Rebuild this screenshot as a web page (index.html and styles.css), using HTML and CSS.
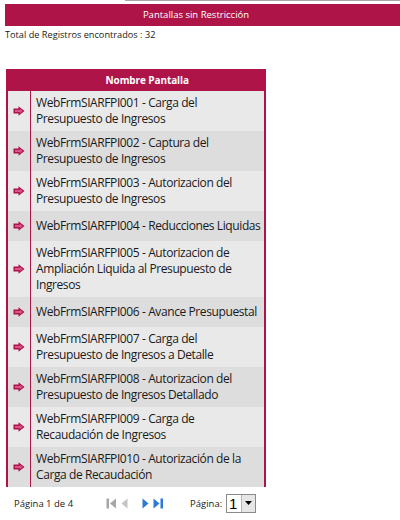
FILE: index.html
```html
<!DOCTYPE html>
<html lang="es">
<head>
    <meta charset="UTF-8">
    <title>Pantallas sin Restricción</title>
    <link rel="stylesheet" href="styles.css">
</head>
<body>
    <div class="top-line"></div>
    <div class="title-bar">Pantallas sin Restricción</div>
    <div class="total">Total de Registros encontrados : 32</div>

    <table class="grid">
        <tr class="grid-head">
            <th class="col-icon"></th>
            <th>Nombre Pantalla</th>
        </tr>
        <tr>
            <td class="col-icon"><svg class="go" viewBox="0 0 12 10"><path d="M0.5 2.5h5V0.3l6 4.7-6 4.7V7.5h-5z"/><path class="go-in" d="M2 4h4.8V2.8l2.8 2.2-2.8 2.2V6H2z"/></svg></td>
            <td>WebFrmSIARFPI001 - Carga del Presupuesto de Ingresos</td>
        </tr>
        <tr>
            <td class="col-icon"><svg class="go" viewBox="0 0 12 10"><path d="M0.5 2.5h5V0.3l6 4.7-6 4.7V7.5h-5z"/><path class="go-in" d="M2 4h4.8V2.8l2.8 2.2-2.8 2.2V6H2z"/></svg></td>
            <td>WebFrmSIARFPI002 - Captura del Presupuesto de Ingresos</td>
        </tr>
        <tr>
            <td class="col-icon"><svg class="go" viewBox="0 0 12 10"><path d="M0.5 2.5h5V0.3l6 4.7-6 4.7V7.5h-5z"/><path class="go-in" d="M2 4h4.8V2.8l2.8 2.2-2.8 2.2V6H2z"/></svg></td>
            <td>WebFrmSIARFPI003 - Autorizacion del Presupuesto de Ingresos</td>
        </tr>
        <tr class="single">
            <td class="col-icon"><svg class="go" viewBox="0 0 12 10"><path d="M0.5 2.5h5V0.3l6 4.7-6 4.7V7.5h-5z"/><path class="go-in" d="M2 4h4.8V2.8l2.8 2.2-2.8 2.2V6H2z"/></svg></td>
            <td>WebFrmSIARFPI004 - Reducciones Liquidas</td>
        </tr>
        <tr>
            <td class="col-icon"><svg class="go" viewBox="0 0 12 10"><path d="M0.5 2.5h5V0.3l6 4.7-6 4.7V7.5h-5z"/><path class="go-in" d="M2 4h4.8V2.8l2.8 2.2-2.8 2.2V6H2z"/></svg></td>
            <td>WebFrmSIARFPI005 - Autorizacion de Ampliación Liquida al Presupuesto de Ingresos</td>
        </tr>
        <tr class="single">
            <td class="col-icon"><svg class="go" viewBox="0 0 12 10"><path d="M0.5 2.5h5V0.3l6 4.7-6 4.7V7.5h-5z"/><path class="go-in" d="M2 4h4.8V2.8l2.8 2.2-2.8 2.2V6H2z"/></svg></td>
            <td>WebFrmSIARFPI006 - Avance Presupuestal</td>
        </tr>
        <tr>
            <td class="col-icon"><svg class="go" viewBox="0 0 12 10"><path d="M0.5 2.5h5V0.3l6 4.7-6 4.7V7.5h-5z"/><path class="go-in" d="M2 4h4.8V2.8l2.8 2.2-2.8 2.2V6H2z"/></svg></td>
            <td>WebFrmSIARFPI007 - Carga del Presupuesto de Ingresos a Detalle</td>
        </tr>
        <tr>
            <td class="col-icon"><svg class="go" viewBox="0 0 12 10"><path d="M0.5 2.5h5V0.3l6 4.7-6 4.7V7.5h-5z"/><path class="go-in" d="M2 4h4.8V2.8l2.8 2.2-2.8 2.2V6H2z"/></svg></td>
            <td>WebFrmSIARFPI008 - Autorizacion del Presupuesto de Ingresos Detallado</td>
        </tr>
        <tr>
            <td class="col-icon"><svg class="go" viewBox="0 0 12 10"><path d="M0.5 2.5h5V0.3l6 4.7-6 4.7V7.5h-5z"/><path class="go-in" d="M2 4h4.8V2.8l2.8 2.2-2.8 2.2V6H2z"/></svg></td>
            <td>WebFrmSIARFPI009 - Carga de Recaudación de Ingresos</td>
        </tr>
        <tr>
            <td class="col-icon"><svg class="go" viewBox="0 0 12 10"><path d="M0.5 2.5h5V0.3l6 4.7-6 4.7V7.5h-5z"/><path class="go-in" d="M2 4h4.8V2.8l2.8 2.2-2.8 2.2V6H2z"/></svg></td>
            <td>WebFrmSIARFPI010 - Autorización de la Carga de Recaudación</td>
        </tr>
    </table>

    <!-- Paginador -->
    <div class="pager">
        <span class="pager-info">Página 1 de 4</span>
        <span class="pager-nav">
            <svg class="nav first" viewBox="0 0 11 11"><rect x="0.5" y="0.5" width="2.5" height="10"/><path d="M10 0.5v10L4 5.5z"/></svg>
            <svg class="nav prev" viewBox="0 0 7 11"><path d="M6.5 0.5v10L0.5 5.5z"/></svg>
            <svg class="nav next" viewBox="0 0 7 11"><path d="M0.5 0.5v10l6-5z"/></svg>
            <svg class="nav last" viewBox="0 0 11 11"><path d="M0.5 0.5v10l6-5z"/><rect x="7.5" y="0.5" width="2.5" height="10"/></svg>
        </span>
        <span class="pager-label">Página:</span>
        <span class="pager-select">
            <span class="sel-value">1</span>
            <span class="sel-btn"><svg viewBox="0 0 7 4"><path d="M0 0h7L3.5 4z"/></svg></span>
        </span>
    </div>
</body>
</html>
```

FILE: styles.css
```css
body {
    margin: 0;
    font-family: "Open Sans", "Noto Sans", sans-serif;
    color: #1a1a1a;
    background-color: #ffffff;
}

.top-line {
    margin-left: 125px;
    height: 1px;
    background-color: #a8a8a8;
}

.title-bar {
    margin: 3px 0 0 5px;
    height: 22px;
    padding-right: 13px;
    background-color: #ae1447;
    color: #ffffff;
    font-size: 9.5px;
    line-height: 22px;
    text-align: center;
}

.total {
    margin: 2px 0 0 5px;
    font-size: 9.2px;
    line-height: 14px;
}

/* Tabla */
.grid {
    margin: 27px 0 0 6px;
    width: 260px;
    border-collapse: collapse;
    border-left: 2px solid #ae1447;
    border-right: 2px solid #ae1447;
    font-size: 12px;
    line-height: 16px;
    letter-spacing: -0.4px;
}

.grid-head th {
    height: 22px;
    padding: 0;
    background-color: #ae1447;
    color: #ffffff;
    font-size: 10px;
    font-weight: bold;
    letter-spacing: -0.1px;
    text-align: center;
}

.grid td {
    padding: 4px 0 4px 5px;
    height: 32px;
    vertical-align: middle;
    background-color: #e9e9e9;
}

.grid tr:nth-child(odd) td {
    background-color: #dddddd;
}

.grid tr.single td {
    height: 22px;
}

.grid .col-icon {
    width: 22px;
    padding: 0;
    text-align: center;
    border-right: 1px solid #ae1447;
}

.grid-head .col-icon {
    border-right: none;
}

.go {
    display: block;
    width: 12px;
    height: 10px;
    margin: 0 auto;
    fill: #b0134a;
}

.go .go-in {
    fill: #d6588a;
}

/* Paginador */
.pager {
    display: flex;
    align-items: center;
    height: 32px;
    font-size: 9.5px;
    color: #222222;
}

.pager-info {
    width: 92px;
    padding-left: 14px;
}

.pager-nav {
    display: flex;
    align-items: center;
    gap: 4px;
    width: 84px;
}

.nav {
    height: 11px;
}

.nav.first,
.nav.last {
    width: 11px;
}

.nav.prev,
.nav.next {
    width: 7px;
}

.nav.first {
    fill: #a6a6a6;
}

.nav.prev {
    fill: #c4c4c4;
    margin-right: 10px;
}

.nav.next,
.nav.last {
    fill: #2d7ad6;
}

.pager-label {
    width: 36px;
}

.pager-select {
    display: flex;
    width: 28px;
    height: 17px;
    border: 1px solid #8a8a8a;
    background-color: #ffffff;
}

.sel-value {
    flex: 1;
    font-family: "Liberation Sans", sans-serif;
    font-size: 15px;
    line-height: 17px;
    padding-left: 2px;
    color: #000000;
}

.sel-btn {
    width: 13px;
    display: flex;
    align-items: center;
    justify-content: center;
    background-color: #e6e6e6;
    border-left: 1px solid #b5b5b5;
}

.sel-btn svg {
    width: 7px;
    height: 4px;
    fill: #000000;
}
```
